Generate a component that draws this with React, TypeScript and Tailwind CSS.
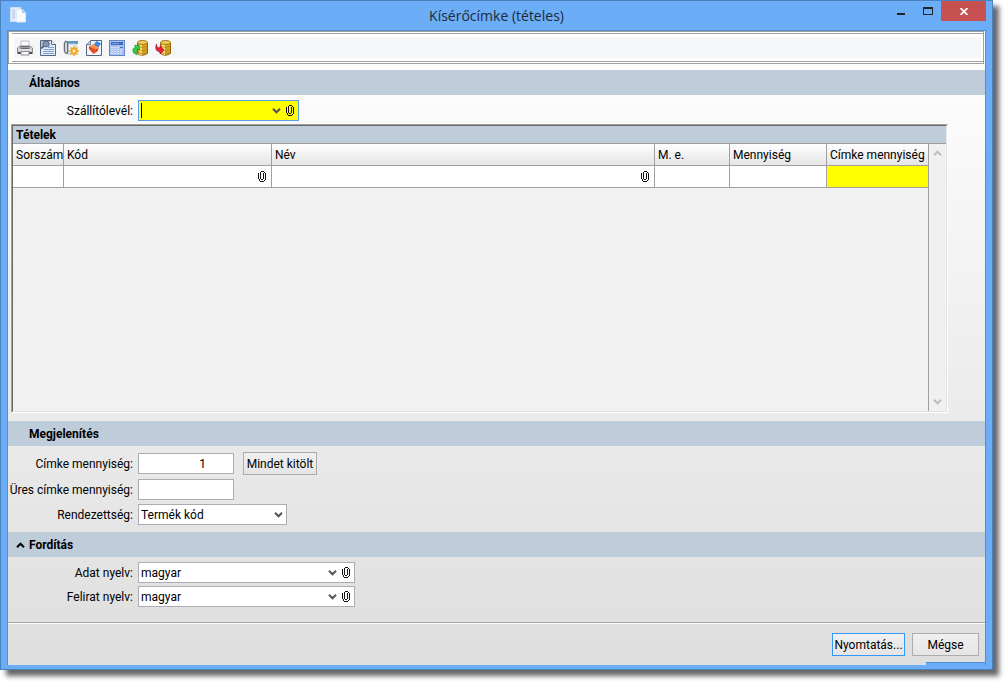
import React, { useState } from 'react';
import clsx from 'clsx';

const Chevron = ({ up = false, className = '' }) => (
  <svg width="9" height="6" viewBox="0 0 9 6" aria-hidden="true" className={clsx('shrink-0 pointer-events-none', up && 'rotate-180', className)}>
    <path d="M1 .8 4.500 4.300 8 .8" fill="none" stroke="currentColor" strokeWidth="2" />
  </svg>
);

const Clip = () => (
  <svg width="8" height="11" viewBox="0 0 8 11" aria-hidden="true" className="block">
    <path
      d="M.5 2V8M1.5 8V10M2 10.500H6M6.500 10V8.500M7.500 9V2M6.500 2V1M6 .5H3M2.500 1V8M3 8.500H5M5.500 8V2"
      fill="none"
      stroke="#111"
      shapeRendering="crispEdges"
    />
  </svg>
);

const ClipButton = () => (
  <button type="button" aria-label="Keresés" className="shrink-0">
    <Clip />
  </button>
);

const PageIcon = () => (
  <svg width="16" height="16" viewBox="0 0 16 16" aria-hidden="true">
    <path d="M.5.5h10v14H.5z" fill="#e4edf8" stroke="#cfdff2" />
    <path d="M2 3h3M2 5h3M2 7h3M2 9h3M2 11h3" stroke="#b4c8e2" />
    <path d="M6.500 2.500h6l3 3v9.500h-9z" fill="#f8fcff" stroke="#dcecf4" />
    <path d="M12.500 2.500v3h3" fill="#b9dcf0" stroke="#9cc8e4" />
  </svg>
);

const PrinterIcon = () => (
  <svg width="16" height="16" viewBox="0 0 16 16">
    <path d="M4 1h8v6H4z" fill="#fafafa" stroke="#c0c0c0" />
    <path d="M.500 8 3 6h10l2.500 2v5.500H.500z" fill="#c9cccf" stroke="#8a8c8f" />
    <path d="M3.500 6h9v3h-9z" fill="#6b6d70" />
    <path d="M4 7.500h8" stroke="#9a9c9f" />
    <path d="M1.500 9.500h13v1h-13z" fill="#f4f4f4" />
    <path d="M1 12h3v2H1zM12 12h3v2h-3z" fill="#4b4d50" />
    <path d="M4 11.500h8V15H4z" fill="#fafafa" stroke="#8d8d8d" />
  </svg>
);

const PreviewIcon = () => (
  <svg width="16" height="16" viewBox="0 0 16 16">
    <path d="M.5.5h11l4 4v11H.5z" fill="#e4edfa" stroke="#56677f" />
    <path d="M11.500.500v4h4" fill="#fff" stroke="#56677f" />
    <path d="M8 7.500h6M4 9.500h10M3 11.500h11M3 13.500h11" stroke="#7da2d6" />
    <path d="M1 1h9v6H1z" fill="#b4c0d6" />
    <circle cx="6" cy="4" r="3" fill="#8796b4" stroke="#5c6b88" />
    <path d="M4 6 1 8.500" stroke="#5c6b88" strokeWidth="2" />
  </svg>
);

const SetupIcon = () => (
  <svg width="16" height="16" viewBox="0 0 16 16">
    <path d="M5 1h10v3H5z" fill="#5d9cc4" />
    <path d="M5 4h8v10H5z" fill="#e9f1f6" stroke="#b6cbd8" />
    <path d="M1.500 3v8M4.500 2v11M1.500 3Q3 .500 4.500 2M1.500 11Q3 14.500 4.500 13" fill="none" stroke="#6b7178" strokeWidth="1.500" />
    <circle cx="11" cy="11" r="2.500" fill="#fff3c4" stroke="#f0a828" strokeWidth="2" />
    <path d="M11 6v2M11 14v2M6 11h2M14 11h2M7.500 7.500 9 9M13 13l1.500 1.500M14.500 7.500 13 9M9 13l-1.500 1.500" stroke="#f0a828" strokeWidth="1.500" />
  </svg>
);

const EraserIcon = () => (
  <svg width="16" height="16" viewBox="0 0 16 16">
    <path d="M4.500.500h11v15H.500v-11z" fill="#eef4fc" stroke="#55657c" />
    <path d="M.500 4.500h4v-4" fill="#b8cbe4" stroke="#6f86a6" />
    <path d="M10.500 1 15 3.500 12 8 7.500 5z" fill="#3d86dc" />
    <path d="M3 6l4.500-2 5.500 4-3 1.500z" fill="#ff9444" />
    <path d="M3 6l7 3.500L7.500 14 3 9z" fill="#e84a1c" />
    <path d="M10 9.500l3-1.500-2 3.500L7.500 14z" fill="#c83410" />
  </svg>
);

const CalculatorIcon = () => (
  <svg width="16" height="16" viewBox="0 0 16 16" shapeRendering="crispEdges">
    <path d="M.500.500h15v15H.500z" fill="#a9c3ee" stroke="#6486c8" />
    <path d="M2 2h12v3H2z" fill="#3f6cc0" />
    <path d="M3 3h7v1H3z" fill="#7da0e0" />
    <path d="M2 7.500h12M2 9.500h12M2 11.500h12M2 13.500h12" stroke="#d6e3fa" strokeDasharray="2 1" />
    <path d="M11 7h3v1h-3z" fill="#3f6cc0" />
  </svg>
);

const Coins = () => (
  <>
    <path d="M5.500 2.500v11Q10 17 15.500 13.500v-11z" fill="#d6a024" stroke="#93690f" />
    <path d="M7 4v10l3 1V4z" fill="#fbe07a" />
    <path d="M6 6.500q4.500 2 9 0M6 9.500q4.500 2 9 0M6 12.500q4.500 2 9 0" fill="none" stroke="#b8861a" strokeWidth=".8" />
    <ellipse cx="10.500" cy="2.500" rx="5" ry="2" fill="#f3cc5a" stroke="#a2761a" />
  </>
);

const LoadIcon = () => (
  <svg width="16" height="16" viewBox="0 0 16 16">
    <Coins />
    <path d="M2.500 5.500 7 5l.500 5-1.800-1.200Q3.500 11 5 14.500 1 14 .800 10.500.800 8 3.500 7z" fill="#2fd03c" stroke="#1b8f2a" strokeWidth=".7" />
  </svg>
);

const SaveIcon = () => (
  <svg width="16" height="16" viewBox="0 0 16 16">
    <Coins />
    <path d="M1.500 4Q1 7.500 5 8V6l4 4-4 4v-2Q-1 11 1.500 4z" fill="#ee2038" stroke="#a81028" strokeWidth=".7" />
  </svg>
);

const TOOLS = [
  { label: 'Nyomtatás', Icon: PrinterIcon },
  { label: 'Előnézet', Icon: PreviewIcon },
  { label: 'Beállítások', Icon: SetupIcon },
  { label: 'Törlés', Icon: EraserIcon },
  { label: 'Számológép', Icon: CalculatorIcon },
  { label: 'Betöltés', Icon: LoadIcon },
  { label: 'Mentés', Icon: SaveIcon },
];

const COLUMNS = ['Sorszám', 'Kód', 'Név', 'M. e.', 'Mennyiség', 'Címke mennyiség'];

const fieldBox = 'flex items-center h-[21px] border border-[#abadb3] bg-white';
const buttonBox = 'h-[23px] border bg-linear-to-b from-[#f0f0f0] to-[#e5e5e5] whitespace-nowrap';

function Row({ id, label, children }) {
  return (
    <div className="flex items-center gap-[5px]">
      <label htmlFor={id} className="w-[125px] shrink-0 flex justify-end whitespace-nowrap">
        {label}
      </label>
      {children}
    </div>
  );
}

function Section({ children }) {
  return <h2 className="h-[25px] shrink-0 flex items-center pl-[21px] bg-[#bfccd9] font-bold">{children}</h2>;
}

function Language({ id, label }) {
  return (
    <Row id={id} label={label}>
      <div className={clsx(fieldBox, 'w-[217px] pr-1')}>
        <select id={id} className="flex-1 appearance-none outline-none pl-[2px]">
          <option>magyar</option>
        </select>
        <Chevron className="text-[#555] mr-[5px]" />
        <ClipButton />
      </div>
    </Row>
  );
}

export default function App() {
  const [count, setCount] = useState('1');
  const [open, setOpen] = useState(true);

  return (
    <div className="min-h-screen flex bg-white pr-3 pb-3 text-xs text-black font-[Roboto,'Open_Sans',sans-serif]">
      <div className="flex-1 min-w-0 flex flex-col border border-[#4a82c0] bg-[#6badf6] shadow-[6px_6px_5px_rgba(0,0,0,0.6)]">
        <header className="h-[29px] shrink-0 grid grid-cols-[1fr_auto_1fr] px-[6px]">
          <div className="pt-[6px] pl-[3px]">
            <PageIcon />
          </div>
          <h1 className="text-sm leading-[29px] text-[#1f2a38] font-['Open_Sans','Noto_Sans',sans-serif]">Kísérőcímke (tételes)</h1>
          <div className="flex justify-end items-start">
            <button type="button" aria-label="Kis méret" className="w-[27px] h-5 flex justify-center items-center">
              <span className="w-2 h-0.5 mt-1.5 bg-[#222]" />
            </button>
            <button type="button" aria-label="Teljes méret" className="w-[27px] h-5 flex justify-center items-center">
              <span className="w-2.5 h-2 border border-t-2 border-[#222]" />
            </button>
            <button type="button" aria-label="Bezárás" className="w-[45px] h-5 flex justify-center items-center bg-[#c75050]">
              <svg width="8" height="7" viewBox="0 0 8 7">
                <path d="M.5 0l7 7M7.500 0l-7 7" stroke="#fff" strokeWidth="1.700" />
              </svg>
            </button>
          </div>
        </header>

        <main className="relative flex-1 flex flex-col mx-[6px] mb-1 border border-b-0 border-[#4f8fd8] bg-linear-to-b from-white to-[#dedede]">
          <div className="shrink-0 mr-px border border-[#a0a0a0] bg-white py-px pl-[3px]">
            <div className="border-y border-[#a0a0a0] py-[3px] px-0.5">
              <div role="toolbar" className="flex items-center gap-[7px] h-[21px] pl-[3px] bg-[#f4f6f8]">
                {TOOLS.map(({ label, Icon }) => (
                  <button key={label} type="button" aria-label={label}>
                    <Icon />
                  </button>
                ))}
              </div>
            </div>
          </div>

          <div className="h-1.5 shrink-0" />
          <Section>Általános</Section>
          <div className="pt-[5px] pb-[3px]">
            <Row id="delivery" label="Szállítólevél:">
              <div className="flex items-center h-[21px] w-[161px] border border-[#569de5] bg-[#ffff00] pl-0.5 pr-1">
                <span className="w-px h-[15px] bg-black" />
                <input id="delivery" type="text" className="flex-1 min-w-0 outline-none" />
                <button type="button" aria-label="Lista" className="mr-[5px]">
                  <Chevron className="text-[#555]" />
                </button>
                <ClipButton />
              </div>
            </Row>
          </div>

          <section className="flex-1 flex flex-col ml-[3px] mr-[37px] mb-2 border border-t-[#a0a0a0] border-l-[#a0a0a0] border-r-white border-b-white">
            <div className="flex-1 flex flex-col border border-t-[#696969] border-l-[#696969] border-r-[#e3e3e3] border-b-[#e3e3e3] bg-[#f1f1f1]">
              <h3 className="h-[18px] flex items-center pl-[3px] border-b border-[#a0a0a0] bg-[#bfccd9] font-bold">Tételek</h3>
              <div className="flex-1 flex">
                <div className="flex-1 border-r border-[#a0a0a0]">
                  <table className="w-full table-fixed border-separate border-spacing-0">
                    <colgroup>
                      <col className="w-[51px]" />
                      <col className="w-[208px]" />
                      <col />
                      <col className="w-[75px]" />
                      <col className="w-[97px]" />
                      <col className="w-[101px]" />
                    </colgroup>
                    <thead>
                      <tr className="h-[22px] bg-linear-to-b from-white to-[#e4e4e4]">
                        {COLUMNS.map((name) => (
                          <th key={name} className="border-r border-b last:border-r-0 border-[#a0a0a0] p-0 pl-[3px] text-left font-normal whitespace-nowrap">
                            {name}
                          </th>
                        ))}
                      </tr>
                    </thead>
                    <tbody>
                      <tr className="h-[22px] bg-white">
                        {COLUMNS.map((name, i) => (
                          <td key={name} className={clsx('border-r border-b last:border-r-0 border-[#a0a0a0] p-0', i === 5 && 'bg-[#ffff00]')}>
                            {(i === 1 || i === 2) && (
                              <div className="flex justify-end pr-[5px]">
                                <ClipButton />
                              </div>
                            )}
                          </td>
                        ))}
                      </tr>
                    </tbody>
                  </table>
                </div>
                <div className="w-[17px] flex flex-col justify-between items-center py-1.5 bg-[#f0f0f0] text-[#bdbdbd]">
                  <Chevron up />
                  <Chevron />
                </div>
              </div>
            </div>
          </section>

          <Section>Megjelenítés</Section>
          <div className="flex flex-col gap-1 pt-1.5 pb-[7px]">
            <Row id="count" label="Címke mennyiség:">
              <input
                id="count"
                type="text"
                value={count}
                onChange={(e) => setCount(e.target.value)}
                className={clsx(fieldBox, 'w-24 pr-[27px] text-right outline-none')}
              />
              <button type="button" className={clsx(buttonBox, 'w-[74px] ml-1 border-[#acacac]')}>
                Mindet kitölt
              </button>
            </Row>
            <Row id="empty" label="Üres címke mennyiség:">
              <input id="empty" type="text" className={clsx(fieldBox, 'w-24 px-1 outline-none')} />
            </Row>
            <Row id="order" label="Rendezettség:">
              <div className={clsx(fieldBox, 'w-[149px] pr-[3px]')}>
                <select id="order" className="flex-1 appearance-none outline-none pl-[2px]">
                  <option>Termék kód</option>
                </select>
                <Chevron className="text-[#555]" />
              </div>
            </Row>
          </div>

          <h2 className="h-[25px] shrink-0 bg-[#bfccd9] font-bold">
            <button type="button" onClick={() => setOpen(!open)} className="h-full flex items-center gap-1 pl-2">
              <Chevron up={open} />
              Fordítás
            </button>
          </h2>
          {open && (
            <div className="flex flex-col gap-[3px] pt-[5px] pb-[15px]">
              <Language id="data-lang" label="Adat nyelv:" />
              <Language id="caption-lang" label="Felirat nyelv:" />
            </div>
          )}

          <footer className="border-t border-[#a0a0a0]">
            <div className="flex justify-end gap-[7px] border-t border-white pt-[9px] pb-[9px] pr-[6px]">
              <button type="button" className={clsx(buttonBox, 'w-[73px] border-[#3399ff]')}>
                Nyomtatás...
              </button>
              <button type="button" className={clsx(buttonBox, 'w-[67px] border-[#acacac]')}>
                Mégse
              </button>
            </div>
          </footer>
          {/* resize corner of the frame */}
          <div className="absolute right-0 bottom-0 w-[59px] h-[3px] border-t border-[#4f8fd8] bg-[#6badf6]" />
        </main>
      </div>
    </div>
  );
}
